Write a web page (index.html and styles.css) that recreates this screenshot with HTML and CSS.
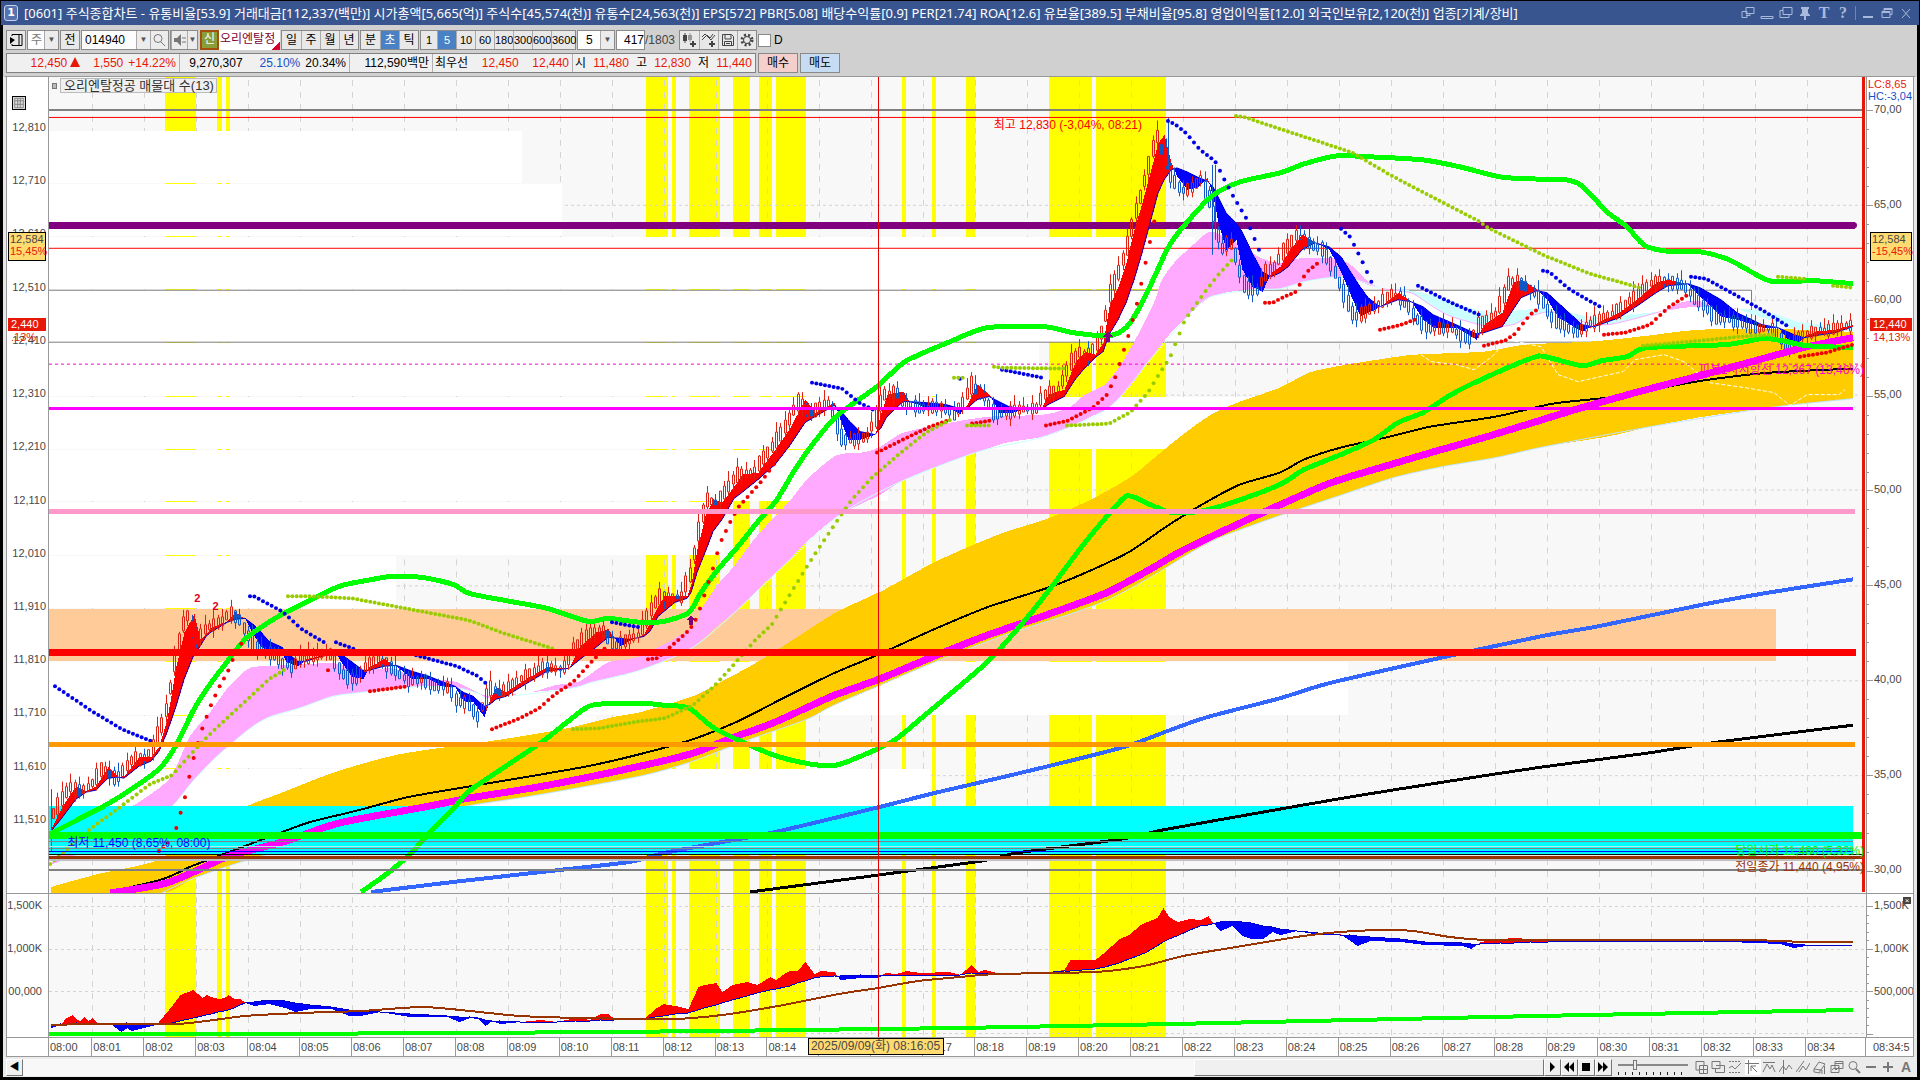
FILE: index.html
```html
<!DOCTYPE html>
<html lang="ko">
<head>
  <meta charset="utf-8">
  <title>[0601] 주식종합차트</title>
  <link rel="stylesheet" href="styles.css">
</head>
<body>

<div class="window">
  <header class="titlebar">
    <span class="badge">1</span>
    <h1>[0601] 주식종합차트 - 유통비율[53.9] 거래대금[112,337(백만)] 시가총액[5,665(억)] 주식수[45,574(천)] 유통수[24,563(천)] EPS[572] PBR[5.08] 배당수익률[0.9] PER[21.74] ROA[12.6] 유보율[389.5] 부채비율[95.8] 영업이익률[12.0] 외국인보유[2,120(천)] 업종[기계/장비]</h1>
    <div class="winbtns">
      <button aria-label="분리"><svg viewBox="0 0 14 14"><path d="M5 1.500h8v6H5zM1 5.500h5v6H1zM5 9.500h4v-2"/></svg></button>
      <button aria-label="내리기"><svg viewBox="0 0 14 14"><path d="M1 10.500h12v2H1z"/></svg></button>
      <button aria-label="복사"><svg viewBox="0 0 14 14"><path d="M4 1.500h9v7H4zM4 4.500H1v7h9v-3"/></svg></button>
      <button aria-label="고정"><svg viewBox="0 0 14 14"><path class="solid" d="M3 1h8v2h-1v4l2 2v1H8v4H6v-4H2V9l2-2V3H3z"/></svg></button>
      <button class="serif" aria-label="글꼴">T</button>
      <button class="serif" aria-label="도움말">?</button>
      <i class="bar"></i>
      <button aria-label="최소화"><svg viewBox="0 0 14 14"><path class="solid" d="M2 10h10v2H2z"/></svg></button>
      <button aria-label="이전 크기"><svg viewBox="0 0 14 14"><path d="M4 5V2.500h8v6h-2M2 5.500h8v6H2zM2 6.500h8M4 3.500h8"/></svg></button>
      <button aria-label="닫기"><svg viewBox="0 0 14 14"><path d="M3 3l8 9M11 3l-8 9"/></svg></button>
    </div>
  </header>

  <div class="toolbar">
    <button class="btn sq" aria-label="메뉴"><svg viewBox="0 0 14 14"><path d="M3 3V1.500h10v11H3V11M10 2v10"/><path class="solid" d="M1 4l5 3-5 4z"/></svg></button>
    <div class="combo c-type"><span class="dim">주</span><button class="arrow" aria-label="종류">▼</button></div>
    <button class="btn sq">전</button>
    <div class="combo c-code"><input type="text" value="014940" aria-label="종목코드"><button class="arrow" aria-label="종목 목록">▼</button><button class="arrow find" aria-label="검색"><svg viewBox="0 0 14 14"><circle cx="6" cy="5.500" r="4"/><path d="M9 9l4 4"/></svg></button></div>
    <div class="combo c-snd"><button class="arrow find" aria-label="소리"><svg viewBox="0 0 14 14"><path class="solid" d="M1 5h3l4-4v12L4 9H1z"/><path d="M10 4v2M10 8v2M12 4v2M12 8v2"/></svg></button><button class="arrow" aria-label="소리 설정">▼</button></div>
    <div class="stock"><span class="tag">신</span><span class="name">오리엔탈정</span></div>
    <div class="group"><button>일</button><button>주</button><button>월</button><button>년</button></div>
    <div class="group"><button>분</button><button class="on">초</button><button>틱</button></div>
    <div class="group nums"><button>1</button><button class="on">5</button><button>10</button><button>60</button><button>180</button><button>300</button><button>600</button><button>3600</button></div>
    <div class="combo c-num"><input type="text" value="5" aria-label="주기"><button class="arrow" aria-label="주기 목록">▼</button></div>
    <div class="count"><input type="text" value="417" aria-label="봉 개수"><span>/1803</span></div>
    <div class="group icons">
      <button aria-label="차트 추가"><svg viewBox="0 0 14 14"><path class="solid" d="M1 2h4v6H1zM2.500 0h1v10h-1z"/><path class="grey" d="M6 2h4v5H6zM7.500 0h1v9h-1z"/><path class="solid" d="M10 8h2v2h2v2h-2v2h-2v-2H8v-2h2z"/></svg></button>
      <button aria-label="지표 추가"><svg viewBox="0 0 14 14"><path d="M0 4l3-3 6 6 4-5M0 7l5-5 3 3 3-4"/><path class="solid" d="M9 8h2v2h2v2h-2v2H9v-2H7v-2h2z"/></svg></button>
      <button aria-label="저장"><svg viewBox="0 0 14 14"><path d="M1.500 1.500h9l2 2v9h-11zM4 2v4h6V2M3.500 12V8.500h7V12M5 10.500h4"/></svg></button>
      <button aria-label="설정"><svg viewBox="0 0 14 14"><circle class="gear" cx="7" cy="7" r="5"/><circle cx="7" cy="7" r="3.500"/></svg></button>
    </div>
    <label class="check"><input type="checkbox"> D</label>
  </div>

  <div class="quotes">
    <div class="qbox">
      <div class="q q1"><b>12,450<i class="up"></i></b><b>1,550</b><b>+14.22%</b></div>
      <div class="q q2"><span>9,270,307</span><em>25.10%</em><span>20.34%</span></div>
      <div class="q q3"><span>112,590백만</span></div>
      <div class="q q4"><span>최우선</span><b>12,450</b><b>12,440</b></div>
      <div class="q q5"><span>시</span><b>11,480</b><span>고</span><b>12,830</b><span>저</span><b>11,440</b></div>
    </div>
    <button class="buy">매수</button>
    <button class="sell">매도</button>
  </div>

  <main class="panes">
    <div class="axis left price">
      <button class="gridbtn" aria-label="데이터 표"><svg viewBox="0 0 14 14"><path d="M2 1.500h10v11H2zM2 4.500h10M2 8.500h10M5.500 2v10M8.500 2v10"/></svg></button>
      <span>12,810</span><span>12,710</span><span>12,610</span><span>12,510</span><span>12,410</span><span>12,310</span><span>12,210</span><span>12,110</span><span>12,010</span><span>11,910</span><span>11,810</span><span>11,710</span><span>11,610</span><span>11,510</span>
      <div class="mark cross"><span>12,584</span><b>15,45%</b></div>
      <div class="mark now"><span>2,440</span><b>.13%</b></div>
    </div>
    <div class="plot">
      <svg id="price" viewBox="49 77 1817 817" preserveAspectRatio="none"></svg>
      <div class="legend"><i></i><span>오리엔탈정공 매물대 수(13)</span></div>
      <span class="note high">최고 12,830 (-3,04%, 08:21)</span>
      <span class="note low">최저 11,450 (8,65%, 08:00)</span>
      <span class="note pivot">피봇1차저항선 12,367 (13,46%)</span>
      <span class="note open">당일시가 11,480 (5,32%)</span>
      <span class="note prev">전일종가 11,440 (4,95%)</span>
      <span class="note two a">2</span><span class="note two b">2</span>
    </div>
    <div class="axis right rate">
      <svg id="rateTicks" viewBox="0 77 12 817" preserveAspectRatio="none"></svg>
      <div class="lchc"><b>LC:8,65</b><em>HC:-3,04</em></div>
      <span>70,00</span><span>65,00</span><span>60,00</span><span>55,00</span><span>50,00</span><span>45,00</span><span>40,00</span><span>35,00</span><span>30,00</span>
      <div class="mark cross"><span>12,584</span><b>-15,45%</b></div>
      <div class="mark now"><span>12,440</span><b>14,13%</b></div>
    </div>

    <div class="axis left vol"><span>1,500K</span><span>1,000K</span><span>00,000</span></div>
    <div class="plot">
      <svg id="volume" viewBox="49 895 1817 143" preserveAspectRatio="none"></svg>
    </div>
    <div class="axis right vol">
      <svg id="volTicks" viewBox="0 895 12 143" preserveAspectRatio="none"></svg>
      <button class="closepane" aria-label="지표 닫기">×</button>
      <span>1,500K</span><span>1,000K</span><span>500,000</span>
    </div>

    <div class="timeline">
      <div class="times" id="times"></div>
      <span class="last">08:34:5</span>
      <div class="timetip">2025/09/09(화) 08:16:05</div>
    </div>
  </main>

  <footer class="bottom">
    <button class="step" aria-label="왼쪽으로">◀</button>
    <div class="track"><div class="thumb"></div></div>
    <div class="play">
      <button aria-label="재생"><svg viewBox="0 0 14 14"><path class="solid" d="M5 2l5 5-5 5z"/></svg></button>
      <button aria-label="뒤로"><svg viewBox="0 0 14 14"><path class="solid" d="M7 2L2 7l5 5zM12 2L7 7l5 5z"/></svg></button>
      <button aria-label="정지"><svg viewBox="0 0 14 14"><path class="solid" d="M3 3h8v8H3z"/></svg></button>
      <button aria-label="앞으로"><svg viewBox="0 0 14 14"><path class="solid" d="M2 2l5 5-5 5zM7 2l5 5-5 5z"/></svg></button>
    </div>
    <input class="speed" type="range" min="0" max="100" value="22" aria-label="속도">
    <div class="tools">
      <button aria-label="복제"><svg viewBox="0 0 14 14"><path d="M2 10V1.500h8V5M2 10h3M5.500 5.500h8v8h-8zM9.500 5v9M5 9.500h9"/></svg></button>
      <button aria-label="겹치기"><svg viewBox="0 0 14 14"><path d="M1 1.500h8v7H1zM4.500 8.500v4h9v-7h-4M5 5.500h8"/></svg></button>
      <button aria-label="영역"><svg viewBox="0 0 14 14"><path stroke-dasharray="2 1" d="M1 1.500h12M1 12.500h12"/><path d="M1 8l3-2 3 3 6-6"/></svg></button>
      <button class="on" aria-label="십자선"><svg viewBox="0 0 14 14"><path d="M3.500 0v14M0 3.500h14M6 6l6 6M6 6h5M6 6v5"/></svg></button>
      <button aria-label="추세"><svg viewBox="0 0 14 14"><path d="M1 2.500h12M1 12l4-8 3 5 2-4 3 7"/></svg></button>
      <button aria-label="세로선"><svg viewBox="0 0 14 14"><path d="M4.500 0v14M0 12l4-6 3 4 3-5 3 4"/></svg></button>
      <button aria-label="사선"><svg viewBox="0 0 14 14"><path d="M0 12L8 1M3 12l4-6 3 4 4-7"/></svg></button>
      <button aria-label="지우개"><svg viewBox="0 0 14 14"><path d="M1 9l5-7 6 2-4 6zM1 9v3l6 1v-3M8 10h1v4M11.500 6v8"/></svg></button>
      <button aria-label="창 복사"><svg viewBox="0 0 14 14"><path d="M5 1.500h8v7H5zM1 5.500h8v7H1zM2 10l2-2 2 2 3-3M5 3.500h8"/></svg></button>
      <button aria-label="돋보기"><svg viewBox="0 0 14 14"><circle cx="6" cy="5.500" r="4"/><path class="thick" d="M9 9l4 4"/></svg></button>
      <button aria-label="축소"><svg viewBox="0 0 14 14"><path class="solid" d="M2 6h10v2H2z"/></svg></button>
      <button aria-label="확대"><svg viewBox="0 0 14 14"><path class="solid" d="M6 2h2v4h4v2H8v4H6V8H2V6h4z"/></svg></button>
      <button class="letter" aria-label="자동">A</button>
    </div>
  </footer>
</div>

<script src="chart.js"></script>
</body>
</html>
```
FILE: styles.css
```css
* {
  box-sizing: border-box;
}

body {
  margin: 0;
  background-color: #000;
  font-family: "Liberation Sans", "Noto Sans CJK KR", sans-serif;
  font-size: 12px;
  line-height: 14px;
  color: #000;
}

button, input {
  font: inherit;
  color: inherit;
  margin: 0;
  padding: 0;
  border: none;
  border-radius: 0;
  background: none;
}

svg {
  display: block;
  fill: none;
  stroke: currentColor;
}

button svg {
  width: 14px;
  height: 14px;
}

.solid {
  fill: currentColor;
  stroke: none;
}

.grey {
  fill: #999;
  stroke: none;
}

.gear {
  stroke-width: 3;
  stroke-dasharray: 2 2;
}

.thick {
  stroke-width: 2;
}

.window {
  display: flex;
  flex-direction: column;
  height: 100vh;
  padding: 1px 3px 3px;
  overflow: hidden;
}

.titlebar {
  display: flex;
  align-items: center;
  gap: 6px;
  height: 24px;
  margin: 0 -2px;
  padding: 0 6px 0 3px;
  background-color: #39558f;
  color: #fff;
}

.titlebar h1 {
  flex: 1;
  margin: 0;
  font-family: "Noto Sans", "Noto Sans CJK KR", sans-serif;
  font-size: 13px;
  font-weight: normal;
  white-space: nowrap;
}

.badge {
  width: 14px;
  border: 1px solid #c8d4ee;
  border-radius: 3px;
  background-color: #5673b0;
  font-family: "DejaVu Sans", sans-serif;
  font-size: 11px;
  font-weight: bold;
  text-align: center;
}

.winbtns {
  display: flex;
  align-items: center;
  gap: 5px;
  color: #a9b9dc;
}

.winbtns .bar {
  width: 1px;
  height: 14px;
  background-color: #7286ae;
}

.serif {
  width: 14px;
  font-family: "Liberation Serif", serif;
  font-size: 16px;
  font-weight: bold;
}

.toolbar, .quotes {
  display: flex;
  padding-left: 3px;
  background-color: #d0d0d0;
}

.toolbar {
  gap: 1px;
  padding-top: 5px;
}

.toolbar > * {
  height: 20px;
}

.btn, .combo, .group {
  display: flex;
  align-items: center;
  justify-content: center;
  border: 1px solid #8a8a8a;
  background-color: #e8e8e8;
}

.sq {
  width: 20px;
}

.combo {
  background-color: #fdfdfd;
}

.combo span, .combo input {
  flex: 1;
  min-width: 0;
  padding-left: 3px;
}

.dim {
  color: #777;
}

.arrow {
  width: 14px;
  height: 18px;
  border-left: 1px solid #aaa;
  background-color: #ececec;
  color: #555;
  font-size: 8px;
}

.arrow.find {
  width: 18px;
  padding-left: 1px;
  color: #777;
}

.c-type {
  width: 32px;
}

.c-code {
  width: 88px;
}

.c-snd {
  width: 28px;
  margin-right: 1px;
}

.c-num {
  width: 38px;
}

.c-num input {
  padding-left: 8px;
}

.stock {
  display: flex;
  width: 80px;
  background: linear-gradient(135deg, #fff 91%, #d8002a 92%);
  color: #7a0038;
  line-height: 18px;
  white-space: nowrap;
}

.tag {
  width: 19px;
  flex: none;
  border: 2px solid #a3500e;
  background-color: #8a9e38;
  color: #fff;
  text-align: center;
  line-height: 15px;
}

.name {
  padding-left: 1px;
}

.group button {
  width: 19px;
  height: 18px;
  white-space: nowrap;
}

.nums {
  font-size: 11px;
}

.nums button:last-child {
  width: 24px;
}

.nums button:first-child {
  width: 16px;
}

.group button + button {
  border-left: 1px solid #aaa;
}

.group .on {
  background-color: #4a80c4;
  color: #fff;
}

.count {
  display: flex;
  align-items: center;
  width: 62px;
  color: #444;
}

.count input {
  width: 29px;
  height: 20px;
  border: 1px solid #8a8a8a;
  background-color: #fff;
  color: #000;
  text-align: right;
}

.icons button {
  padding-left: 2px;
  color: #444;
}

.check {
  display: flex;
  align-items: center;
  gap: 3px;
}

.check input {
  appearance: none;
  width: 13px;
  height: 13px;
  border: 1px solid #8a8a8a;
  background-color: #fff;
}

.quotes {
  gap: 2px;
  padding-top: 3px;
  padding-bottom: 3px;
}

.qbox {
  display: flex;
  height: 20px;
  border: 1px solid #808080;
  background-color: #f0f0f0;
}

.q {
  display: flex;
  justify-content: flex-end;
  align-items: center;
  padding: 0 3px 0 2px;
  white-space: nowrap;
}

.q + .q {
  border-left: 1px solid #b0b0b0;
}

.q b, .axis b {
  color: #e81808;
  font-weight: normal;
}

.q em, .axis em {
  color: #1450c8;
  font-style: normal;
}

.up {
  display: inline-block;
  margin-left: 3px;
  border: 5px solid transparent;
  border-top: none;
  border-bottom: 10px solid #e81808;
}

.q1 {
  width: 172px;
  gap: 5px;
}

.q1 b:first-child {
  margin-right: 8px;
}

.q2 {
  width: 170px;
  gap: 5px;
}

.q2 span:first-child {
  margin-right: 12px;
}

.q3 {
  width: 83px;
}

.q4 {
  width: 140px;
  justify-content: space-between;
}

.q5 {
  width: 183px;
  justify-content: space-between;
}

.buy, .sell {
  width: 40px;
  height: 20px;
  border: 1px solid #8a8a8a;
  background-color: #f4cfcb;
}

.sell {
  background-color: #c6dcf2;
}

.panes {
  flex: 1;
  min-height: 0;
  display: grid;
  grid-template-columns: 43px 1fr 48px;
  grid-template-rows: 817fr 144fr 19px;
  border-top: 1px solid #999;
  border-left: 3px solid #e8e8e8;
  border-right: 3px solid #e8e8e8;
  background-color: #fff;
}

.axis, .plot {
  position: relative;
  min-width: 0;
  min-height: 0;
  overflow: hidden;
  border-bottom: 1px solid #999;
}

.axis {
  display: flex;
  flex-direction: column;
  justify-content: space-between;
  background-color: #fff;
  color: #484848;
  font-size: 11px;
}

.left {
  border-left: 1px solid #999;
  border-right: 1px solid #999;
  text-align: right;
  padding-right: 2px;
}

.right {
  border-left: 1px solid #999;
  border-right: 1px solid #999;
  padding-left: 7px;
}

.price {
  padding-top: 43px;
  padding-bottom: 67px;
}

.rate {
  padding-top: 25px;
  padding-bottom: 17px;
}

.vol {
  padding-top: 4px;
  padding-bottom: 39px;
}

.left.vol {
  padding-right: 6px;
}

.plot {
  background-color: #f8f8f8;
}

.plot svg, .axis > svg {
  position: absolute;
  top: 0;
  left: 0;
  width: 100%;
  height: 100%;
  shape-rendering: crispEdges;
}

.plot circle {
  shape-rendering: geometricPrecision;
}

.axis > svg {
  width: 12px;
}

.gridbtn, .mark, .lchc, .closepane {
  position: absolute;
}

.gridbtn {
  top: 19px;
  left: 5px;
  border: 1px solid #000;
  background-color: #ddd;
  width: 14px;
  color: #777;
}

.gridbtn svg {
  width: 12px;
  height: 12px;
}

.mark {
  display: flex;
  flex-direction: column;
  text-align: left;
}

.left .mark {
  left: 1px;
  width: 38px;
}

.right .mark {
  left: 3px;
  width: 42px;
}

.cross {
  top: 19%;
  height: 29px;
  padding-left: 1px;
  border: 1px solid #000;
  background-color: #ffdb70;
  line-height: 12px;
}

.now {
  top: 29%;
  padding-top: 4px;
  line-height: 13px;
}

.now span {
  padding-left: 3px;
  background-color: #e81808;
  color: #fff;
}

.now b {
  padding-left: 3px;
}

.lchc {
  display: flex;
  flex-direction: column;
  top: 1px;
  left: 1px;
  line-height: 12px;
}

.closepane {
  top: 3px;
  right: 2px;
  width: 8px;
  height: 7px;
  background-color: #444;
  color: #fff;
  font-size: 8px;
  line-height: 6px;
}

.legend {
  position: absolute;
  top: 1px;
  left: 3px;
  display: flex;
  align-items: center;
  gap: 3px;
  color: #333;
  font-size: 13px;
}

.legend i {
  width: 5px;
  height: 6px;
  border: 1px solid #777;
  background-color: #bbb;
}

.legend span {
  padding: 0 2px 0 3px;
  border: 1px solid #bbb;
  background-color: #f0f0f0;
  line-height: 13px;
}

.note {
  position: absolute;
  white-space: nowrap;
}

.high {
  top: 5%;
  left: 52%;
  color: #f00;
}

.low {
  top: 93%;
  left: 1%;
  color: #00f;
}

.pivot, .open, .prev {
  right: 2px;
}

.pivot {
  top: 35%;
  color: #f0c;
}

.open {
  top: 94%;
  color: #0e0;
}

.prev {
  top: 96%;
  color: #930;
}

.two {
  color: #e00020;
  font-size: 11px;
  font-weight: bold;
}

.two.a {
  top: 63%;
  left: 8%;
}

.two.b {
  top: 64%;
  left: 9%;
}

.timeline {
  position: relative;
  grid-column: 1 / -1;
  display: flex;
  border: 1px solid #999;
  border-top: none;
  background-color: #fff;
  color: #484848;
  font-size: 11px;
}

.times {
  flex: 1;
  display: flex;
  margin-left: 41px;
}

.times span {
  flex: 52 0 0;
  min-width: 0;
  padding: 2px 0 0 1px;
  border-left: 1px solid #999;
}

.times span:first-child {
  flex-grow: 43;
}

.times span:last-child {
  flex-grow: 60;
}

.last {
  width: 48px;
  padding: 2px 0 0 7px;
  border-left: 1px solid #999;
}

.timetip {
  position: absolute;
  top: 0;
  left: 42%;
  width: 136px;
  height: 17px;
  border: 1px solid #000;
  background-color: #ffdb70;
  font-size: 12px;
  text-align: center;
  white-space: nowrap;
}

.bottom {
  display: flex;
  align-items: center;
  height: 20px;
  padding: 0 3px;
  background-color: #ebebeb;
}

.step, .play button, .thumb {
  height: 17px;
  border: 1px solid #777;
  border-top-color: #fff;
  border-left-color: #fff;
  background-color: #f0f0f0;
}

.step {
  width: 17px;
  font-size: 10px;
}

.track {
  flex: 1;
  display: flex;
  justify-content: flex-end;
  background-color: #f8f8f8;
}

.thumb {
  width: 23%;
}

.play {
  display: flex;
}

.play button {
  width: 17px;
}

.speed {
  appearance: none;
  width: 70px;
  height: 16px;
  margin: 0 6px;
  background:
    linear-gradient(#888, #888) 0 5px / 100% 2px no-repeat,
    repeating-linear-gradient(90deg, #222 0 1px, transparent 1px 7px) 0 100% / 100% 3px no-repeat;
}

.speed::-webkit-slider-thumb {
  appearance: none;
  width: 4px;
  height: 10px;
  margin-bottom: 4px;
  border: 1px solid #777;
  background-color: #eee;
}

.tools {
  display: flex;
  gap: 1px;
  color: #777;
}

.tools button {
  width: 16px;
  height: 16px;
}

.tools .on {
  background-color: #fff;
}

.letter {
  font-size: 14px;
  font-weight: bold;
}
```
FILE: chart.js
```js
var NS = "http://www.w3.org/2000/svg";

function add(svg, tag, attrs) {
  var el = document.createElementNS(NS, tag);
  for (var k in attrs) el.setAttribute(k, attrs[k]);
  svg.appendChild(el);
}
function parse(s) {
  return s.trim().split(" ").map(function (p) { return p.split(",").map(Number); });
}
// rounds the corners of a series of points
function smooth(s) {
  var p = parse(s), d = p[0][0] + " " + p[0][1];
  for (var i = 0; i < p.length - 1; i++) {
    var a = p[i - 1] || p[i], b = p[i], c = p[i + 1], e = p[i + 2] || c;
    d += "C" + [b[0] + (c[0] - a[0]) / 8, b[1] + (c[1] - a[1]) / 8, c[0] - (e[0] - b[0]) / 8, c[1] - (e[1] - b[1]) / 8, c[0], c[1]].join(" ");
  }
  return d;
}
function rect(svg, x1, y1, x2, y2, fill) {
  add(svg, "rect", { x: x1, y: y1, width: x2 - x1, height: y2 - y1, fill: fill, stroke: "none" });
}
function line(svg, pts, color, width) {
  add(svg, "path", { d: "M" + smooth(pts), stroke: color, "stroke-width": width, "stroke-linejoin": "round" });
}
function area(svg, upper, lower, color) {
  add(svg, "path", { d: "M" + smooth(upper) + "L" + smooth(lower) + "Z", fill: color, stroke: "none" });
}
function hline(svg, y, x2, color, width, dash) {
  add(svg, "line", { x1: 49, x2: x2, y1: y, y2: y, stroke: color, "stroke-width": width, "stroke-dasharray": dash || "none" });
}
function at(pts, x, k) {
  for (var i = 1; i < pts.length; i++) {
    if (x <= pts[i][0]) {
      var a = pts[i - 1], b = pts[i];
      return a[k] + (b[k] - a[k]) * (x - a[0]) / (b[0] - a[0]);
    }
  }
  return pts[pts.length - 1][k];
}
// one dot per 5 second bar
function dots(svg, s, color) {
  var p = parse(s);
  for (var x = p[0][0]; x <= p[p.length - 1][0]; x += 4.33) {
    add(svg, "circle", { cx: x, cy: at(p, x, 1), r: 2, fill: color, stroke: "none" });
  }
}
// fill between the fast and the slow line, red above and blue below
function cloud(svg, p) {
  var slow = "";
  for (var x = p[0][0]; x < p[p.length - 1][0]; x += 1) {
    var f = at(p, x, 1), s = at(p, x, 2);
    slow += x + "," + s + " ";
    if (Math.abs(f - s) > 0.5) rect(svg, x, Math.min(f, s), x + 1, Math.max(f, s), f < s ? "#ff0000" : "#0000ff");
  }
  line(svg, slow, "#0000c8", 1);
}

var bands = [[165, 196], [217, 222], [226, 230], [646, 668], [672, 676], [689, 720], [733, 750], [759, 772], [776, 806], [902, 906], [932, 936], [966, 975], [1049, 1092], [1096, 1166]];

function grid(svg, y1, y2, rows) {
  bands.forEach(function (b) { rect(svg, b[0], y1, b[1], y2, "#ffff00"); });
  for (var i = 0; i < 34; i++) {
    var x = Math.round(92 + i * 51.96) + 0.5;
    add(svg, "line", { x1: x, x2: x, y1: y1 + 3, y2: y2, stroke: "#d4d4d4", "stroke-dasharray": "6 6" });
  }
  rows.forEach(function (y) { hline(svg, y + 0.5, 1866, "#d4d4d4", 1, "3 3"); });
}

var price = document.getElementById("price");
grid(price, 77, 894, [205, 300, 395, 490, 586, 681, 776]);

// volume profile
[[131, 183, 522], [184, 236, 562], [237, 289, 1195], [290, 342, 1751], [343, 396, 1039], [397, 449, 1290], [450, 502, 888], [503, 556, 724], [557, 609, 396], [663, 716, 1348], [717, 769, 596], [770, 807, 930]].forEach(function (b) {
  rect(price, 49, b[0], b[2], b[1], "#ffffff");
});
rect(price, 49, 610, 1776, 662, "#ffcc99");
add(price, "path", { d: "M49 290.5H1751.5V342.5H49", stroke: "#808080" });

area(price, "51,888 98,875 155,862 204,833 245,808 278,795 335,773 400,755 490,742 563,730 612,718 640,713 693,697 722,682 750,667 783,647 836,613 881,592 934,563 979,543 1007,532 1048,519 1091,500 1130,478 1150,462 1179,438 1211,415 1240,402 1280,388 1309,373 1341,366 1378,360 1415,355 1484,352 1525,345 1590,342 1639,337 1688,331 1725,329 1782,329 1811,331 1853,332", "1853,399 1770,408 1704,417 1651,427 1607,437 1545,447 1496,458 1443,467 1394,478 1337,497 1280,516 1220,538 1191,553 1150,578 1109,600 1069,615 1007,635 934,663 879,687 836,705 807,720 742,743 693,762 640,777 531,797 461,808 347,833 241,863 192,880 161,894 51,894", "#ffcc00");
area(price, "49,866 88,833 131,808 169,780 190,737 210,713 229,687 249,669 265,667 333,664 363,671 392,669 412,677 437,680 457,683 473,691 490,697 531,693 555,686 580,682 608,663 640,657 693,628 701,610 718,585 734,567 754,540 775,517 791,500 807,480 836,456 862,453 879,448 901,434 926,428 962,421 991,417 1044,415 1069,408 1085,395 1105,385 1122,363 1138,335 1154,303 1162,280 1175,262 1191,247 1209,232 1224,237 1244,247 1260,258 1280,263 1296,259 1321,258 1341,260 1353,267 1368,282 1382,289", "1382,289 1368,285 1349,278 1329,278 1304,282 1280,289 1252,290 1236,291 1211,297 1191,313 1171,333 1150,360 1130,387 1109,408 1089,418 1069,428 1044,437 1007,443 979,452 934,468 901,482 879,496 840,515 807,542 787,563 758,590 738,610 718,626 693,648 664,662 640,671 592,683 571,689 531,693 490,699 478,694 453,688 433,687 404,688 363,693 333,697 302,708 269,718 249,730 216,758 192,783 171,808 131,833 59,863", "#ffaaff");
line(price, "59,863 131,833 171,808 192,783 216,758 249,730 269,718 302,708 333,697 363,693 404,688 453,688 478,694 490,699 571,689 592,683 640,671 693,648 738,610 787,563 840,515 901,482 979,452 1044,437 1109,408 1150,360 1191,313 1211,297 1252,290 1280,289 1304,282 1329,278 1349,278 1382,289", "#ccffff", 1);
area(price, "1382,289 1411,291 1431,295 1455,303 1480,311 1500,312 1541,309 1566,312 1590,317 1615,316 1639,314 1660,312", "1660,312 1640,318 1607,325 1586,323 1566,315 1549,312 1529,317 1513,325 1492,327 1472,323 1447,315 1427,303 1411,293", "#ccffff");
area(price, "1660,312 1684,302 1704,302 1721,305 1737,309", "1737,309 1704,307 1684,308", "#ffaaff");
area(price, "1737,309 1753,310 1778,315 1798,322 1823,325 1853,325", "1853,331 1798,330 1778,323 1753,315", "#ccffff");
line(price, "1382,289 1411,293 1427,303 1447,315 1472,323 1492,327 1513,325 1529,317 1549,312 1566,315 1586,323 1607,325 1631,320 1660,312", "#ffaaff", 1);
line(price, "161,894 192,880 241,863 347,833 461,808 531,797 640,777 693,762 742,743 807,720 836,705 934,663 1007,635 1069,615 1109,600 1150,578 1191,553 1220,538 1280,516 1337,497 1394,478 1443,467 1496,458 1545,447 1651,427 1770,408 1853,399", "#bfe4ff", 1);

rect(price, 49, 807, 1853, 855, "#00ffff");
add(price, "polyline", { points: "1421,355 1431,362 1456,365 1474,370 1492,357 1508,340 1541,347 1558,375 1578,382 1623,372 1635,360 1664,355 1684,362 1709,383 1745,388 1774,393 1790,406 1807,395 1839,395 1845,390", stroke: "#ffffff", "stroke-dasharray": "4 2" });

hline(price, 110, 1863, "#808080", 2);
hline(price, 117.5, 1863, "#ff0000", 1);
hline(price, 225.5, 1855, "#800080", 7);
add(price, "circle", { cx: 1854, cy: 225.5, r: 3, fill: "#800080", stroke: "none" });
hline(price, 248.5, 1863, "#ff0000", 1);
hline(price, 364.5, 1863, "#ff00cc", 1, "3 3");

// price against its slow average
var bars = parse("51,830,832 61,810,820 67,800,812 76,787,800 86,792,793 96,787,791 108,768,779 118,778,778 124,777,779 139,758,767 151,758,762 159,747,752 167,720,733 176,667,707 184,633,680 194,615,655 200,640,647 206,635,637 212,628,632 227,622,623 235,613,620 245,620,619 253,635,625 261,648,633 269,652,642 282,655,648 286,663,653 298,667,662 306,660,662 318,657,658 335,653,654 341,663,655 351,677,662 363,680,671 369,668,671 384,660,667 396,667,666 412,680,672 429,680,677 441,687,682 455,688,687 463,702,693 473,703,697 484,718,707 490,700,705 496,688,700 506,693,697 522,682,687 547,668,672 569,669,669 580,647,660 596,633,648 608,630,638 620,647,639 629,642,640 640,637,638 644,635,637 650,623,632 658,607,617 664,597,612 675,597,603 687,597,599 691,585,593 697,550,573 705,517,553 713,500,532 722,503,520 734,487,499 742,475,493 758,473,480 775,450,465 789,430,447 805,400,423 815,413,417 834,403,406 840,420,410 848,440,420 860,440,432 875,435,435 881,413,428 887,395,417 903,392,402 909,402,402 926,408,403 946,407,405 960,414,409 967,405,409 977,385,400 989,395,397 999,413,402 1009,414,407 1024,410,410 1042,408,410 1048,395,405 1064,390,397 1075,363,380 1085,352,368 1095,355,358 1103,343,352 1109,307,335 1118,287,320 1126,263,303 1134,230,280 1142,203,253 1150,173,223 1158,143,193 1164,135,180 1171,163,170 1177,177,168 1187,190,172 1197,188,177 1207,178,181 1213,197,187 1218,223,197 1226,250,213 1236,240,223 1242,270,232 1252,287,253 1262,292,272 1271,273,277 1280,267,273 1288,252,267 1302,235,250 1315,243,243 1329,250,247 1341,273,257 1351,297,273 1360,317,287 1368,313,298 1380,307,307 1398,293,300 1411,302,302 1423,320,307 1433,328,315 1456,328,325 1476,340,334 1484,325,333 1502,313,327 1513,283,310 1521,280,298 1537,290,291 1547,300,293 1558,318,303 1582,332,325 1594,325,327 1619,313,318 1639,298,305 1656,283,293 1668,280,286 1688,285,284 1700,297,288 1721,317,300 1737,320,313 1762,328,325 1778,328,328 1794,348,335 1804,337,338 1815,332,336 1835,330,333 1853,325,327");
cloud(price, bars);

// candles follow the fast line
for (var n = 0, x = 53; x < 1853; n++, x += 4.33) {
  var y = at(bars, x, 1), lean = Math.max(-14, Math.min(14, at(bars, x + 6, 1) - y));
  var up = lean < -1 || (lean < 1 && n % 3);
  var h = Math.round(4 + (n * 7) % 9 + Math.abs(lean) / 2);
  var cx = Math.round(x) + 0.5, t = Math.round(y + lean - h / 2) + 0.5;
  add(price, "path", {
    d: "M" + (cx - 1) + " " + t + "h2v" + h + "h-2zM" + cx + " " + (t - (n * 5) % 11) + "V" + t + "M" + cx + " " + (t + h) + "v" + (n * 3) % 8,
    stroke: up ? "#e02010" : "#1058c8"
  });
}
[[51, 790, 852], [1168, 118, 170], [1212, 165, 255], [1215, 165, 240]].forEach(function (w) {
  add(price, "path", { d: "M" + (w[0] + 0.5) + " " + w[1] + "V" + w[2], stroke: "#1058c8" });
});

line(price, "371,893 453,883 559,871 629,863 664,854 722,843 775,833 879,808 934,794 1007,777 1089,757 1130,746 1167,732 1207,718 1280,699 1329,684 1443,658 1541,637 1598,627 1704,605 1770,593 1853,580", "#3366ff", 4);
line(price, "750,893 975,863 1016,854 1122,840 1162,831 1280,810 1349,798 1443,783 1541,768 1647,754 1717,743 1853,726", "#000000", 3);
line(price, "110,893 163,880 192,867 229,853 282,833 310,823 359,811 408,798 465,788 531,777 588,767 640,755 693,740 738,722 783,699 807,687 836,673 879,655 934,630 987,608 1052,587 1093,570 1130,552 1171,524 1211,500 1240,485 1280,473 1304,460 1341,448 1390,437 1431,427 1496,417 1553,404 1607,398 1668,387 1709,380 1770,373 1853,369", "#000000", 2);
line(price, "110,894 163,885 196,872 229,857 286,842 339,824 424,808 469,799 543,787 640,767 693,754 734,738 775,723 832,697 879,680 934,657 987,636 1048,615 1105,594 1150,570 1179,553 1220,533 1272,509 1329,484 1374,470 1431,453 1484,438 1533,423 1582,408 1639,392 1704,375 1770,357 1807,347 1853,338", "#ff00ff", 7);
line(price, "49,835 73,823 102,808 127,793 159,770 175,748 194,710 208,688 229,660 245,640 261,628 282,615 306,603 339,587 367,581 392,577 422,578 453,585 469,594 510,602 547,609 588,622 608,619 640,623 664,622 689,613 701,593 718,570 738,547 758,522 777,500 795,470 811,447 836,417 877,387 905,362 950,342 987,328 1044,327 1073,333 1109,336 1126,328 1140,307 1154,278 1167,250 1179,232 1211,197 1240,182 1280,173 1304,164 1337,156 1372,157 1423,160 1460,167 1500,177 1530,179 1566,180 1582,186 1607,212 1627,227 1645,246 1672,252 1700,252 1729,260 1766,280 1782,282 1815,281 1853,284", "#00ff00", 5);
line(price, "361,893 384,877 408,857 433,830 453,810 469,792 494,775 543,742 567,723 592,706 640,704 664,706 689,709 716,730 771,755 811,765 836,766 856,759 893,742 926,715 987,663 1024,622 1052,587 1085,543 1122,500 1132,497 1150,505 1171,513 1199,512 1232,503 1280,485 1304,470 1341,455 1374,440 1398,423 1423,413 1451,395 1492,375 1533,358 1545,357 1582,366 1602,361 1627,357 1647,348 1725,345 1762,339 1782,341 1807,346 1853,348", "#00ff00", 5);

["55,687 92,712 122,730 154,743", "250,597 254,597 282,612 302,630 324,643", "336,643 355,650", "416,656 457,667 478,677 488,686", "612,623 640,628", "812,383 842,389 859,403 873,410", "960,379 964,381", "1002,370 1042,378", "1168,121 1176,125 1186,133 1200,150 1215,161 1224,179 1233,196 1246,218 1263,260", "1341,229 1350,237 1362,261 1374,288", "1418,286 1449,302 1479,315", "1543,271 1549,272 1570,290 1600,307", "1691,277 1706,279 1735,295 1765,312 1790,328"].forEach(function (s) { dots(price, s, "#0000e8"); });
["159,852 171,840 176,830 180,816 185,798 189,779 193,761 202,730 211,706 219,688 228,672 235,655 245,638", "328,671 332,671", "370,692 408,687", "492,730 520,719 539,709 555,695 573,683 592,662 608,646", "648,660 657,659 677,642 690,630 697,618 705,594 713,569 720,544 729,525 738,508 748,497 763,480 775,463", "877,453 905,439 930,427 950,420", "972,424 991,421", "1046,426 1068,421 1093,408 1107,395 1116,376 1124,350 1129,334 1138,300 1146,261 1155,218", "1265,303 1273,303 1280,299 1296,292 1306,273 1318,263", "1380,330 1398,326 1415,320", "1484,346 1505,341 1515,334 1530,315 1540,308", "1604,335 1625,333 1650,325 1668,308 1688,295", "1800,357 1826,353 1853,345"].forEach(function (s) { dots(price, s, "#f00000"); });
["50,865 73,845 90,830 120,808 150,785 172,776 200,745 215,730 239,708 269,680 285,670", "288,597 312,597 352,599 400,608 469,621 504,634 555,650", "573,730 600,729 640,722 665,719 693,706 714,687 734,665 756,640 772,625 787,600 807,567 818,550 840,517 852,500 872,478 901,453 926,433 951,420", "954,378 964,378", "967,426 990,426", "994,367 1000,368 1066,369", "1067,426 1109,424 1130,413 1148,393 1160,373 1170,358 1185,320 1205,292 1220,273 1234,258", "1236,116 1244,117 1280,129 1320,142 1353,153 1390,175 1480,222 1488,228 1545,256 1590,274 1640,288", "1643,346 1700,341 1740,337 1775,335", "1778,277 1804,279", "1833,286 1853,288"].forEach(function (s) { dots(price, s, "#99cc00"); });

// price levels
hline(price, 408.5, 1853, "#ff00ff", 3);
hline(price, 512.5, 1855, "#ff99cc", 5);
hline(price, 653.5, 1856, "#ff0000", 7);
hline(price, 745.5, 1855, "#ff9900", 5);
hline(price, 842.5, 1853, "#808080", 1);
hline(price, 847.5, 1853, "#c0e8e8", 1);
hline(price, 849.5, 1853, "#808080", 1);
hline(price, 852.5, 1853, "#0000ff", 1);
hline(price, 855.5, 1863, "#000000", 1);
hline(price, 861, 1855, "#c0c0c0", 2);
hline(price, 858.5, 1863, "#993300", 3);
hline(price, 871, 1863, "#808080", 2);
hline(price, 836.5, 1863, "#00ff00", 7);
[[691, 624], [1108, 340]].forEach(function (a) {
  add(price, "path", { d: "M" + a[0] + " " + (a[1] - 8) + "l5 5h-3v5h-4v-5h-3z", fill: "#800080", stroke: "none" });
});
rect(price, 878, 77, 879, 894, "#e80000");
rect(price, 1862, 77, 1865, 893, "#e81808");

var volume = document.getElementById("volume");
grid(volume, 895, 1038, [907, 950, 992, 1034]);
cloud(volume, parse("51,1029,1026 60,1026,1025 66,1019,1025 72,1016,1025 76,1020,1024 80,1022,1024 84,1018,1024 88,1022,1024 92,1019,1024 98,1025,1024 110,1025,1024 121,1033,1024 127,1029,1024 131,1032,1025 156,1026,1026 171,1008,1024 180,996,1022 193,991,1019 202,999,1017 206,996,1016 211,998,1015 218,1000,1013 224,999,1012 228,996,1011 234,1000,1009 240,1000,1006 245,1004,1004 254,1007,1003 269,1005,1001 285,1009,1002 295,1013,1004 310,1010,1006 331,1010,1008 349,1017,1011 360,1017,1012 380,1013,1013 410,1018,1015 447,1018,1017 459,1023,1018 470,1019,1018 478,1020,1019 485,1027,1021 492,1022,1022 500,1025,1022 520,1023,1023 540,1021,1023 557,1023,1023 575,1019,1022 590,1021,1022 600,1015,1021 608,1015,1021 614,1020,1021 644,1020,1020 655,1010,1018 663,1005,1017 675,1007,1015 688,1010,1014 698,988,1011 704,986,1009 716,984,1006 722,993,1004 732,986,1001 747,983,997 757,986,994 770,978,991 776,981,990 785,974,988 790,972,987 797,972,984 805,963,982 814,975,979 820,972,978 834,973,977 840,981,977 860,979,976 878,979,976 885,974,976 896,975,976 906,972,976 920,974,976 949,973,976 960,976,976 971,966,974 978,973,974 984,971,974 997,974,974 1043,974,974 1064,971,972 1070,961,972 1095,961,970 1105,953,968 1119,940,964 1129,936,960 1140,926,956 1147,923,953 1157,919,947 1163,909,943 1169,918,940 1177,923,937 1190,920,931 1200,921,927 1208,917,926 1212,923,925 1220,932,923 1232,927,922 1242,937,923 1251,940,924 1263,940,927 1272,933,928 1280,936,930 1297,932,932 1318,936,934 1340,935,936 1350,942,936 1357,947,937 1370,942,938 1400,943,940 1425,946,943 1462,947,944 1471,950,945 1480,943,945 1500,940,944 1514,939,944 1530,940,943 1548,942,943 1621,943,942 1645,940,942 1661,940,942 1680,941,942 1704,942,942 1780,945,943 1793,949,945 1805,947,946 1853,946,946"));
line(volume, "49,1035 255,1035 612,1033 960,1029 1174,1025 1536,1017 1853,1011", "#00ff00", 4);
line(volume, "51,1026 92,1025 178,1025 245,1017 300,1014 361,1012 422,1008 470,1012 520,1017 582,1019 673,1020 722,1016 778,1007 839,995 878,989 918,982 960,978 997,975 1095,973 1144,967 1183,957 1236,948 1303,937 1340,933 1382,931 1413,932 1450,938 1487,941 1548,941 1744,941 1805,943 1853,943", "#993300", 2);
rect(volume, 878, 895, 879, 1038, "#e80000");

function ticks(id, from, step, count) {
  var svg = document.getElementById(id);
  for (var i = 0; i < count; i++) {
    var y = Math.round(from + i * step);
    rect(svg, 0, y, i % 5 ? 2 : 6, y + 1, "#999999");
  }
}
ticks("rateTicks", 110, 19.04, 41);
ticks("volTicks", 907, 8.5, 16);

// the crosshair label stands over 08:15 and 08:16
var times = document.getElementById("times");
for (var m = 0; m < 35; m++) {
  var cell = document.createElement("span");
  if (m != 15 && m != 16) cell.textContent = "08:" + (m < 10 ? "0" : "") + m;
  times.appendChild(cell);
}
```
